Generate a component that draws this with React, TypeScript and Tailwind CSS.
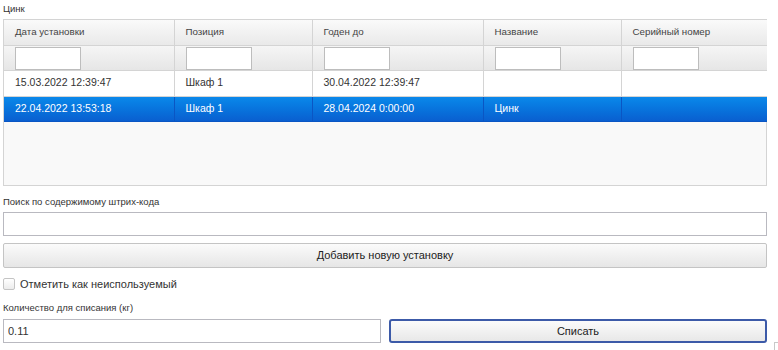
import { useState } from "react";

type Row = {
  installed: string;
  position:  string;
  validTo:   string;
  name:      string;
  serial:    string;
};

const rows: Row[] = [
  { installed: "15.03.2022 12:39:47", position: "Шкаф 1", validTo: "30.04.2022 12:39:47", name: "",     serial: "" },
  { installed: "22.04.2022 13:53:18", position: "Шкаф 1", validTo: "28.04.2024 0:00:00",  name: "Цинк", serial: "" },
];

const columns = [
  { title: "Дата установки", w: "w-[170px]" },
  { title: "Позиция",        w: "w-[138px]" },
  { title: "Годен до",       w: "w-[171px]" },
  { title: "Название",       w: "w-[138px]" },
  { title: "Серийный номер", w: "w-[146px]" },
];

export default function App() {
  const [selected, setSelected] = useState(1);
  const [unused,   setUnused]   = useState(false);
  const [qty,      setQty]      = useState("0.11");

  return (
    <div className="relative h-[350px] w-[778px] bg-white font-['Liberation_Sans',Arial,sans-serif] text-[#333]">
      <div className="ml-[3px] w-[764px]">
        <p className="h-[19px] pt-[3px] text-[9.5px] leading-[12px]">Цинк</p>

        {/* таблица установок */}
        <div className="h-[167px] border border-[#d4d4d4] bg-[#f9f9f9]">
          <table className="w-full table-fixed border-collapse text-[10.5px]">
            <thead>
              <tr className="h-[25px] bg-gradient-to-b from-[#fafafa] to-[#e9e9e9] text-[9.75px] text-[#444]">
                {columns.map((c, i) => (
                  <th
                    key={c.title}
                    className={`${c.w} ${i > 0 ? "border-l border-[#d4d4d4]" : ""} border-b border-[#d4d4d4] pl-[11px] text-left font-normal`}
                  >
                    {c.title}
                  </th>
                ))}
              </tr>
              <tr className="h-[25px] bg-gradient-to-b from-[#f6f6f6] to-[#e6e6e6]">
                {columns.map((c, i) => (
                  <th
                    key={c.title}
                    className={`${i > 0 ? "border-l border-[#d4d4d4]" : ""} border-b border-[#d4d4d4] pl-[11px] pt-[1px] text-left align-top`}
                  >
                    <input className="block h-[23px] w-[66px] border border-[#bdbdbd] bg-white outline-none" />
                  </th>
                ))}
              </tr>
            </thead>
            <tbody>
              {rows.map((r, idx) => {
                const sel = idx === selected;
                const cells = [r.installed, r.position, r.validTo, r.name, r.serial];
                return (
                  <tr
                    key={idx}
                    onClick={() => setSelected(idx)}
                    className={
                      sel
                        ? "h-[25px] bg-gradient-to-b from-[#0b8aeb] to-[#0a5fd0] text-white"
                        : "h-[26px] bg-white text-[#333]"
                    }
                  >
                    {cells.map((v, i) => (
                      <td
                        key={i}
                        className={`${i > 0 ? (sel ? "border-l border-[#0a56b8]" : "border-l border-[#d4d4d4]") : ""} ${sel ? "border-b border-[#0a56c4]" : "border-b border-[#d4d4d4]"} pl-[11px]`}
                      >
                        {v}
                      </td>
                    ))}
                  </tr>
                );
              })}
            </tbody>
          </table>
        </div>

        <p className="mt-[10px] h-[16px] text-[9.5px] leading-[12px]">Поиск по содержимому штрих-кода</p>
        <input className="block h-[24px] w-full border border-[#b9b9c0] bg-white px-2 text-[11px] outline-none" />

        <button className="mt-[7px] block h-[25px] w-full rounded-[2px] border border-[#c4c4c4] bg-gradient-to-b from-[#fbfbfb] to-[#e6e6e6] text-[11px] text-[#222]">
          Добавить новую установку
        </button>

        <label className="mt-[9px] flex h-[14px] items-center gap-[5px] text-[11px] text-[#333]">
          <input
            type="checkbox"
            checked={unused}
            onChange={(e) => setUnused(e.target.checked)}
            className="h-[12px] w-[12px] appearance-none rounded-[2px] border border-[#c4c4c4] bg-gradient-to-b from-white to-[#ececec]"
          />
          Отметить как неиспользуемый
        </label>

        <p className="mt-[11px] h-[17px] text-[9.5px] leading-[12px]">Количество для списания (кг)</p>
        <div className="flex items-start gap-[8px]">
          <input
            value={qty}
            onChange={(e) => setQty(e.target.value)}
            className="block h-[24px] w-[378px] border border-[#b9b9c0] bg-white px-[4px] text-[11px] text-[#333] outline-none"
          />
          <button className="h-[24px] flex-1 rounded-[3px] border-2 border-[#3c5aa8] bg-gradient-to-b from-[#fbfbfb] to-[#e8e8e8] text-[11px] text-[#222]">
            Списать
          </button>
        </div>
      </div>

      {/* уголок внизу справа */}
      <div className="absolute left-[774px] top-[342px] h-[8px] w-[4px] border-l border-t border-[#c8c8c8]" />
    </div>
  );
}
